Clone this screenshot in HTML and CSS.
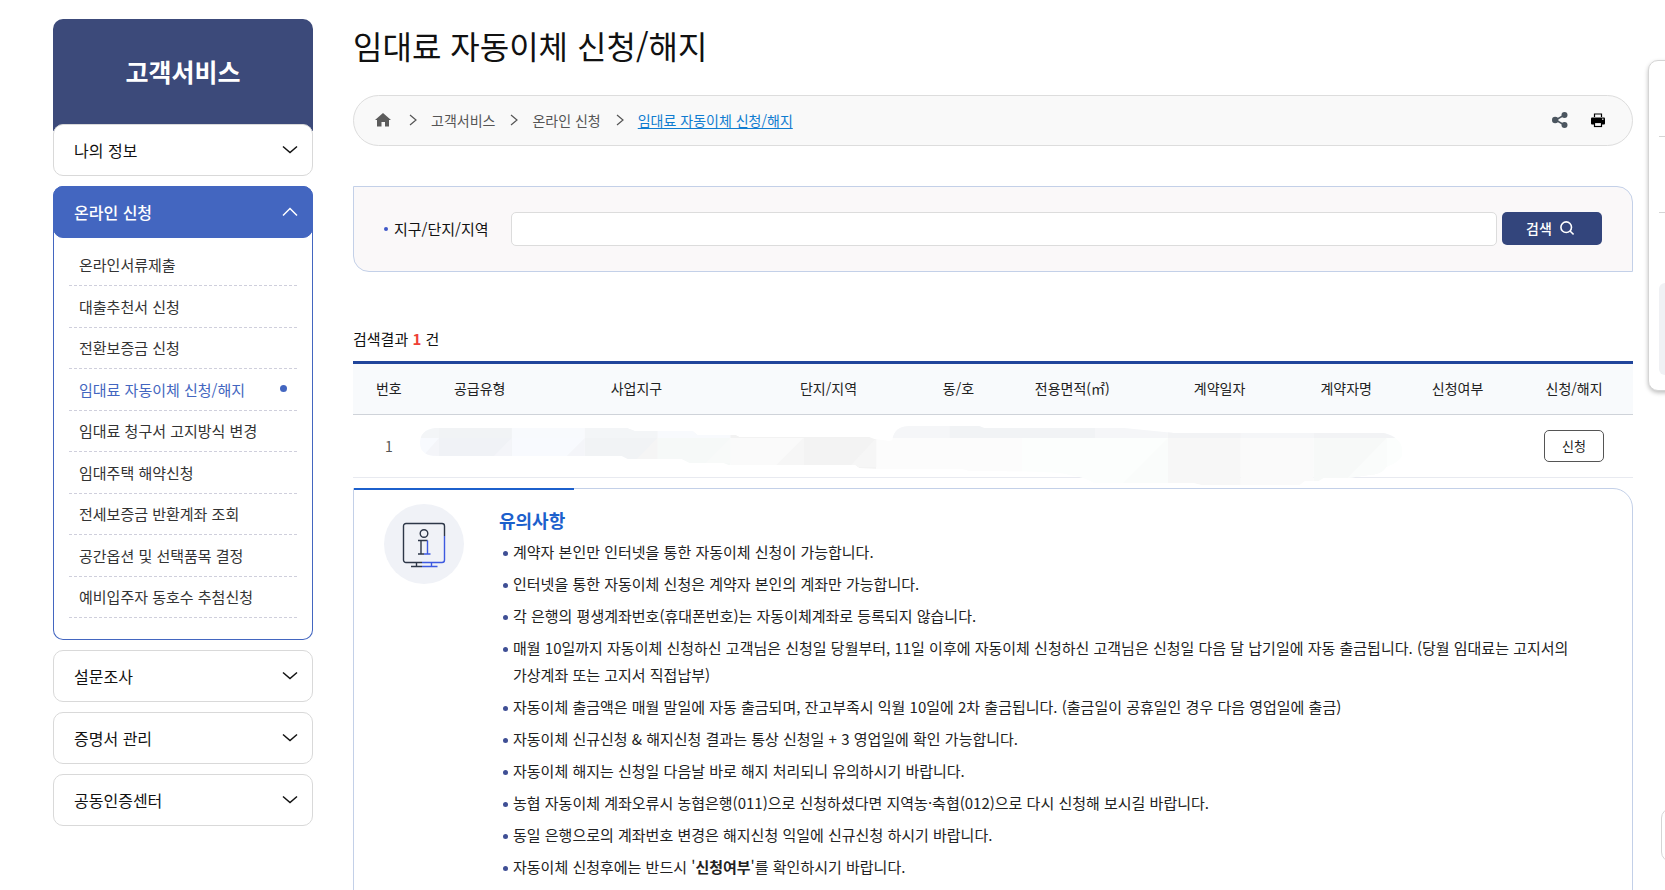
FILE: index.html
```html
<!DOCTYPE html>
<html lang="ko">
<head>
<meta charset="utf-8">
<meta name="viewport" content="width=device-width, initial-scale=1">
<title>임대료 자동이체 신청/해지</title>
<link rel="stylesheet" href="styles.css">
</head>
<body>
<div class="page">
  <aside class="side">
    <h2 class="side-title">고객서비스</h2>
    <nav class="side-nav" aria-label="고객서비스">
      <button class="side-item" type="button">나의 정보
        <svg class="chev" viewBox="0 0 16 10"><path d="M1 1.5l7 6 7-6"/></svg></button>
      <div class="side-group">
        <button class="side-item open" type="button" aria-expanded="true">온라인 신청
          <svg class="chev" viewBox="0 0 16 10"><path d="M1 8.5l7-7 7 7"/></svg></button>
        <ul class="sub">
          <li><a href="#">온라인서류제출</a></li>
          <li><a href="#">대출추천서 신청</a></li>
          <li><a href="#">전환보증금 신청</a></li>
          <li><a class="current" href="#">임대료 자동이체 신청/해지</a></li>
          <li><a href="#">임대료 청구서 고지방식 변경</a></li>
          <li><a href="#">임대주택 해약신청</a></li>
          <li><a href="#">전세보증금 반환계좌 조회</a></li>
          <li><a href="#">공간옵션 및 선택품목 결정</a></li>
          <li><a href="#">예비입주자 동호수 추첨신청</a></li>
        </ul>
      </div>
      <button class="side-item" type="button">설문조사
        <svg class="chev" viewBox="0 0 16 10"><path d="M1 1.5l7 6 7-6"/></svg></button>
      <button class="side-item" type="button">증명서 관리
        <svg class="chev" viewBox="0 0 16 10"><path d="M1 1.5l7 6 7-6"/></svg></button>
      <button class="side-item" type="button">공동인증센터
        <svg class="chev" viewBox="0 0 16 10"><path d="M1 1.5l7 6 7-6"/></svg></button>
    </nav>
  </aside>

  <main class="main">
    <h1 class="title">임대료 자동이체 신청/해지</h1>

    <div class="crumbs">
      <a class="home" href="#" aria-label="홈"><svg viewBox="0 0 16 14"><path d="M8 0l8 7h-2v6.500h-4V9H6.500v4.500H2V7H0z"/></svg></a>
      <svg class="sep" viewBox="0 0 8 12"><path d="M1 1l6 5-6 5"/></svg>
      <a href="#">고객서비스</a>
      <svg class="sep" viewBox="0 0 8 12"><path d="M1 1l6 5-6 5"/></svg>
      <a href="#">온라인 신청</a>
      <svg class="sep" viewBox="0 0 8 12"><path d="M1 1l6 5-6 5"/></svg>
      <a class="here" href="#">임대료 자동이체 신청/해지</a>
      <div class="tools">
        <button type="button" aria-label="공유"><svg viewBox="0 0 16 16"><path d="M12.500 3L3.500 8l9 5" fill="none" stroke="#4b555f" stroke-width="1.500"/><g fill="#4b555f"><circle cx="12.500" cy="3" r="3"/><circle cx="3.200" cy="8" r="3.200"/><circle cx="12.500" cy="13" r="3"/></g></svg></button>
        <button type="button" aria-label="인쇄"><svg viewBox="0 0 16 16"><path d="M4.500 5V2h7V5" fill="none" stroke="#000" stroke-width="1.200"/><rect x="1" y="5.500" width="14" height="7" rx="1"/><rect x="4.500" y="10.500" width="7" height="4" fill="#f9f9f9" stroke="#000" stroke-width="1.200"/><rect x="12" y="6.500" width="1.500" height="1.500" fill="#bbb"/></svg></button>
      </div>
    </div>

    <form class="search">
      <label for="region">지구/단지/지역</label>
      <input id="region" type="text">
      <button type="submit">검색
        <svg viewBox="0 0 14 14"><circle cx="6.200" cy="6.200" r="5.300"/><path d="M10 10l3.600 3.400"/></svg></button>
    </form>

    <p class="count">검색결과 <strong>1</strong> 건</p>

    <table class="result">
      <colgroup><col class="c1"><col class="c2"><col class="c3"><col class="c4"><col class="c5"><col class="c6"><col class="c7"><col class="c8"><col class="c9"><col class="c10"></colgroup>
      <thead>
        <tr><th scope="col">번호</th><th scope="col">공급유형</th><th scope="col">사업지구</th><th scope="col">단지/지역</th><th scope="col">동/호</th><th scope="col">전용면적(㎡)</th><th scope="col">계약일자</th><th scope="col">계약자명</th><th scope="col">신청여부</th><th scope="col">신청/해지</th></tr>
      </thead>
      <tbody>
        <tr>
          <td>1</td>
          <td class="masked" colspan="8">
            <svg class="mask" viewBox="0 0 984 60" preserveAspectRatio="none" aria-hidden="true">
              <clipPath id="brush"><path d="M15 3H207L215 6H273L278 10H316L320 12H450L455 14L470 16L473 15Q475 1 490 1H560L565 3H705L755 8H965Q984 12 984 28Q984 36 968 42Q962 50 950 50L930 53H905L900 56H886L881 60H783L775 58H675Q665 52 650 50Q640 46 550 46L543 44H460L440 43L436 40H309L304 38H270L262 34H208L202 31H20Q0 32 0 18Q0 5 15 3Z"/></clipPath>
              <g clip-path="url(#brush)">
                <path fill="#f8fafe" d="M0 0H19V60H0zM92 0H165V60H92z"/>
                <path fill="#f0f2f6" d="M19 0H92V60H19z"/>
                <path fill="#f1f3f5" d="M165 0H238V60H165z"/>
                <path fill="#f6f9f8" d="M238 0H311V60H238z"/>
                <path fill="#fafafa" d="M311 0H384V60H311zM822 0H895V60H822z"/>
                <path fill="#f3f3f3" d="M384 0H457V60H384z"/>
                <path fill="#fcfcfc" d="M457 0H603V60H457z"/>
                <path fill="#fcfefd" d="M603 0H749V60H603zM968 0H984V60H968z"/>
                <path fill="#f7f7f7" d="M749 0H822V60H749z"/>
                <path fill="#f7f9f8" d="M895 0H968V60H895z"/>
                <path fill="#f4f5f9" d="M19 13V31H3zM92 13V31H74zM165 13V31H147z"/>
                <path fill="#f5f5f5" d="M238 13V34H217z"/>
                <path fill="#f8faf9" d="M311 13V38H286z"/>
                <path fill="#f6f6f6" d="M384 13V40H357zM457 13V42H430z"/>
                <path fill="#fafcfb" d="M749 13V58H704zM968 13V54H928z"/>
                <path fill="#f3f5f7" d="M0 0H19V13H0zM165 0H238V13H165z"/>
                <path fill="#f1f3f5" d="M19 0H92V13H19zM530 0H676V13H530z"/>
                <path fill="#f8fafd" d="M92 0H165V13H92zM238 0H311V13H238z"/>
                <path fill="#f2f2f2" d="M311 0H450V13H311z"/>
                <path fill="#f5f6f8" d="M457 0H530V13H457zM676 0H749V13H676zM822 0H895V13H822z"/>
                <path fill="#f2f3f5" d="M749 0H822V13H749zM895 0H978V13H895z"/>
              </g>
            </svg>
          </td>
          <td><button class="apply" type="button">신청</button></td>
        </tr>
      </tbody>
    </table>

    <section class="notice">
      <div class="notice-icon">
        <svg viewBox="0 0 44 44" fill="none" stroke="#2d3748" stroke-width="1.400">
          <path d="M20 40.500H4a2.500 2.500 0 0 1-2.500-2.500V4A2.500 2.500 0 0 1 4 1.500H40A2.500 2.500 0 0 1 42.500 4V14"/>
          <circle cx="22" cy="11.500" r="3.800"/><path d="M16 18.500H25.500M19 18.500V32M16 32H22M14.500 40.500V44.500M9 44.500H20"/>
          <path stroke="#3d5ae0" d="M42.500 14V38a2.500 2.500 0 0 1-2.500 2.500H20M25.500 18.500V32M22 32H28.500M29.500 40.500V44.500M20 44.500H35.500"/>
        </svg>
      </div>
      <div class="notice-body">
        <h3>유의사항</h3>
        <ul>
          <li>계약자 본인만 인터넷을 통한 자동이체 신청이 가능합니다.</li>
          <li>인터넷을 통한 자동이체 신청은 계약자 본인의 계좌만 가능합니다.</li>
          <li>각 은행의 평생계좌번호(휴대폰번호)는 자동이체계좌로 등록되지 않습니다.</li>
          <li>매월 10일까지 자동이체 신청하신 고객님은 신청일 당월부터, 11일 이후에 자동이체 신청하신 고객님은 신청일 다음 달 납기일에 자동 출금됩니다. (당월 임대료는 고지서의 가상계좌 또는 고지서 직접납부)</li>
          <li>자동이체 출금액은 매월 말일에 자동 출금되며, 잔고부족시 익월 10일에 2차 출금됩니다. (출금일이 공휴일인 경우 다음 영업일에 출금)</li>
          <li>자동이체 신규신청 &amp; 해지신청 결과는 통상 신청일 + 3 영업일에 확인 가능합니다.</li>
          <li>자동이체 해지는 신청일 다음날 바로 해지 처리되니 유의하시기 바랍니다.</li>
          <li>농협 자동이체 계좌오류시 농협은행(011)으로 신청하셨다면 지역농·축협(012)으로 다시 신청해 보시길 바랍니다.</li>
          <li>동일 은행으로의 계좌번호 변경은 해지신청 익일에 신규신청 하시기 바랍니다.</li>
          <li>자동이체 신청후에는 반드시 '<strong>신청여부</strong>'를 확인하시기 바랍니다.</li>
        </ul>
      </div>
    </section>
  </main>
</div>

<aside class="quick" aria-label="퀵메뉴">
  <span class="quick-row"></span><span class="quick-row"></span><span class="quick-gap"></span><span class="quick-box"></span>
</aside>
<button class="to-top" type="button" aria-label="맨 위로"></button>
</body>
</html>
```
FILE: styles.css
```css
* { box-sizing: border-box; }
body {
  margin: 0;
  height: 100vh;
  overflow: hidden;
  background: #fff;
  color: #111;
  font-family: "Noto Sans CJK KR", "Noto Sans", sans-serif;
  font-size: 15px;
  line-height: 24px;
}
button, input { font: inherit; color: inherit; }
button { cursor: pointer; }
a { color: inherit; text-decoration: none; }
ul { list-style: none; margin: 0; padding: 0; }
h1, h2, h3, p { margin: 0; }
svg { display: block; }

.page { display: flex; gap: 40px; padding: 19px 32px 0 53px; }

/* sidebar */
.side { flex: 0 0 260px; }
.side-title {
  height: 112px;
  padding-bottom: 8px;
  display: flex; align-items: center; justify-content: center;
  background: #3c4a7a;
  border-radius: 10px 10px 0 0;
  color: #fff;
  font-size: 25px;
  font-weight: 700;
}
.side-nav { display: flex; flex-direction: column; gap: 10px; margin-top: -7px; }
.side-item {
  display: flex; align-items: center; justify-content: space-between;
  width: 100%;
  height: 52px;
  padding: 0 14px 0 20px;
  background: #fff;
  border: 1px solid #d9d9d9;
  border-radius: 10px;
  font-size: 16px;
  text-align: left;
}
.side-item.open { background: #4366c0; border-color: #4366c0; color: #fff; font-weight: 500; }
.chev { width: 16px; height: 10px; fill: none; stroke: currentColor; stroke-width: 1.5; }
.side-group { border-radius: 10px; box-shadow: inset 0 0 0 1px #4366c0; }
.sub { padding: 7px 16px 22px; }
.sub a {
  position: relative;
  display: block;
  padding: 8px 0 8px 10px;
  border-bottom: 1px dashed #cfcfdc;
  color: #333;
  line-height: 25px;
}
.sub li:nth-child(odd) a { padding: 7px 0 8px 10px; }
.sub .current { color: #4366c0; }
.sub .current::after {
  content: "";
  position: absolute; right: 10px; top: 16px;
  width: 7px; height: 7px;
  border-radius: 50%;
  background: #4366c0;
}

/* main column */
.main { flex: 1; min-width: 0; }
.title { font-size: 32px; font-weight: 400; line-height: 52px; }
.crumbs {
  display: flex; align-items: center;
  height: 51px;
  margin-top: 24px;
  padding: 0 26px 2px 21px;
  background: #f9f9f9;
  border: 1px solid #ddd;
  border-radius: 26px;
  color: #555;
  font-size: 14px;
}
.home { margin-right: 3px; }
.home svg { width: 16px; height: 14px; fill: #5c5c5c; }
.sep { width: 8px; height: 12px; margin: 0 14px 0 15px; fill: none; stroke: #555; stroke-width: 1.2; }
.here { color: #0f7cd0; text-decoration: underline; text-underline-offset: 2px; }
.tools { display: flex; gap: 22px; margin-left: auto; }
.tools button { padding: 0; border: 0; background: none; }
.tools svg { width: 16px; height: 16px; }

.search {
  display: flex; align-items: center; gap: 5px;
  margin-top: 40px;
  padding: 25px 30px 25px 30px;
  background: #faf8f9;
  border: 1px solid #c3d0e8;
  border-radius: 0 16px 0 16px;
}
.search label { display: flex; align-items: center; margin-right: 17px; }
.search label::before {
  content: "";
  width: 4px; height: 4px; margin-right: 6px;
  border-radius: 50%;
  background: #3f58c8;
}
.search input {
  flex: 1; min-width: 0;
  height: 34px;
  padding: 0 10px;
  border: 1px solid #dcdcdc;
  border-radius: 5px;
  background: #fff;
}
.search button {
  display: flex; align-items: center; justify-content: center; gap: 8px;
  align-self: flex-start;
  width: 100px; height: 33px;
  padding: 0 4px 2px 0;
  border: 0; border-radius: 5px;
  background: #33457c;
  color: #fff;
  font-size: 14px; font-weight: 500;
}
.search svg { width: 14px; height: 14px; fill: none; stroke: #fff; stroke-width: 1.6; }

.count { margin-top: 55px; }
.count strong { color: #ee4036; }

.result {
  width: 100%;
  margin-top: 10px;
  border-collapse: separate; border-spacing: 0;
  border-top: 3px solid #20459b;
  table-layout: fixed;
  font-size: 14px;
}
.c1 { width: 5.6%; } .c2 { width: 8.6%; } .c3 { width: 15.9%; } .c4 { width: 14.1%; } .c5 { width: 6.2%; }
.c6 { width: 11.6%; } .c7 { width: 11.4%; } .c8 { width: 8.4%; } .c9 { width: 9%; } .c10 { width: 9.2%; }
.result th {
  height: 51px; padding: 0 0 3px;
  background: #f8fafc;
  border-bottom: 1px solid #cfd3d9;
  color: #222;
  font-weight: 400;
}
.result td {
  height: 63px; padding: 0 0 1px;
  border-bottom: 1px solid #e8eaf0;
  color: #555;
  text-align: center;
}
.result .masked { position: relative; }
.mask { position: absolute; left: -5px; top: 10px; width: 90.1%; height: 60px; }
.apply {
  width: 60px; height: 32px;
  padding: 0;
  border: 1px solid #555; border-radius: 5px;
  background: #fff;
  color: #222;
  font-size: 13px;
}

.notice {
  position: relative;
  display: flex; gap: 35px;
  margin-top: 10px;
  padding: 15px 45px 30px 30px;
  border: 1px solid #c3d0e8;
  border-radius: 0 20px 0 20px;
}
.notice::before {
  content: "";
  position: absolute; left: 0; top: -1px;
  width: 220px; height: 2px;
  background: #1c60cc;
}
.notice-icon {
  flex: none;
  display: flex; align-items: center; justify-content: center;
  width: 80px; height: 80px;
  border-radius: 50%;
  background: #f0f2f7;
}
.notice-icon svg { width: 44px; height: 44px; overflow: visible; }
.notice-body { flex: 1; min-width: 0; }
.notice h3 { margin-bottom: 2px; color: #1c60cc; font-size: 18px; font-weight: 700; line-height: 32px; }
.notice ul { display: grid; gap: 5px; }
.notice li { position: relative; padding-left: 14px; color: #222; line-height: 27px; word-break: keep-all; }
.notice li::before {
  content: "";
  position: absolute; left: 4px; top: 13px;
  width: 5px; height: 5px;
  border-radius: 50%;
  background: #3f4f95;
}

/* floating quick menu at the right edge */
.quick {
  position: fixed; left: calc(100% - 17px); top: 60px;
  width: 90px; height: 331px;
  padding-left: 10px;
  background: #fff;
  border: 1px solid #d5d5d5;
  border-radius: 10px;
  box-shadow: 0 2px 4px rgba(0, 0, 0, .25);
}
.quick-row { display: block; height: 76px; border-bottom: 1px solid #d5d5d5; }
.quick-gap { display: block; height: 70px; }
.quick-box { display: block; height: 92px; border-radius: 6px; background: #f0f1f4; }
.to-top {
  position: fixed; left: calc(100% - 4px); top: 808px;
  width: 54px; height: 54px;
  border: 1px solid #d5d5d5; border-radius: 10px;
  background: #fff;
}
```
